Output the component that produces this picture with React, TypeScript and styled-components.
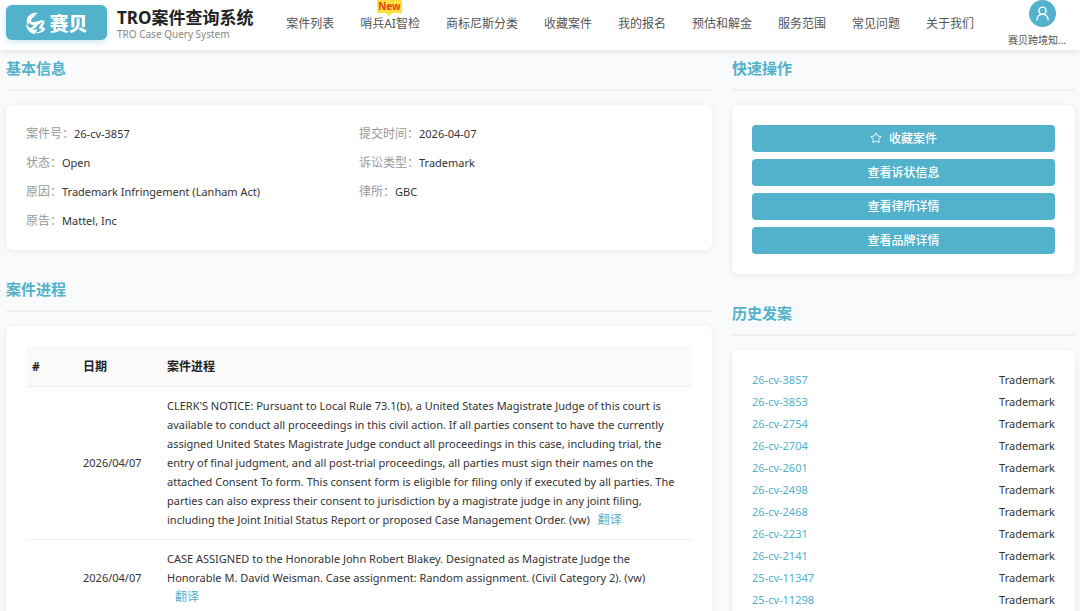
import React from 'react';
import styled, { createGlobalStyle } from 'styled-components';
import { Star, UserRound } from 'lucide-react';

const teal = '#52b1cb';

const GlobalStyle = createGlobalStyle`
  * { box-sizing: border-box; }
  body {
    margin: 0;
    background: #f9fafc;
    color: #333;
    font-family: "Noto Sans", "Noto Sans CJK SC", sans-serif;
    font-size: 11px;
  }
  button { font-family: inherit; cursor: pointer; }
  a { text-decoration: none; }
`;

const Header = styled.header`
  position: sticky;
  top: 0;
  z-index: 2;
  display: flex;
  align-items: center;
  height: 50px;
  padding: 0 4px 0 6px;
  background: #fff;
  box-shadow: 0 2px 6px rgba(0, 0, 0, 0.1);
`;

const Logo = styled.a`
  display: flex;
  align-items: center;
  justify-content: center;
  gap: 3px;
  width: 101px;
  height: 35px;
  margin-bottom: 5px;
  border-radius: 6px;
  background: ${teal};
  box-shadow: 0 2px 6px rgba(82, 177, 203, 0.3);
  color: #fff;
  font-size: 19px;
  font-weight: 900;
`;

const Brand = styled.div`
  flex: 1;
  margin-left: 10px;
  padding-bottom: 2px;
  white-space: nowrap;
`;

const BrandName = styled.h1`
  margin: 0;
  color: #222;
  font-size: 17px;
  line-height: 20px;
  font-weight: 700;
`;

const BrandSub = styled.p`
  margin: 0;
  color: #888;
  font-size: 10px;
  line-height: 12px;
`;

const Nav = styled.nav`
  display: flex;
  gap: 26px;
  margin-right: 34px;
  padding-bottom: 2px;
`;

const NavLink = styled.a`
  position: relative;
  color: #555;
  font-size: 12px;
  line-height: 18px;
  white-space: nowrap;
`;

const NewBadge = styled.span`
  position: absolute;
  left: 17px;
  bottom: 20px;
  padding: 0 1px;
  background: #ffe03c;
  color: #e8401c;
  font-size: 10px;
  line-height: 13px;
  font-weight: 700;

  &::after {
    content: '';
    position: absolute;
    top: 100%;
    left: 50%;
    margin-left: -3px;
    border: 3px solid transparent;
    border-top-color: #ffe03c;
    border-bottom: 0;
  }
`;

const User = styled.button`
  display: flex;
  flex-direction: column;
  align-items: center;
  gap: 5px;
  width: 68px;
  padding: 0 0 2px;
  border: 0;
  background: none;
  color: #555;
  font-size: 10px;
  line-height: 16px;
`;

const UserName = styled.span`
  width: 100%;
  text-align: left;
  white-space: nowrap;
`;

const Avatar = styled.span`
  display: grid;
  place-items: center;
  width: 27px;
  height: 27px;
  border-radius: 50%;
  background: ${teal};
  color: #fff;
`;

const Page = styled.main`
  display: grid;
  grid-template-columns: minmax(0, 35fr) minmax(0, 17fr);
  gap: 20px;
  align-items: start;
  padding: 6px 5px 20px 6px;
`;

const Section = styled.section`
  margin-bottom: 27px;
`;

const SectionTitle = styled.h2`
  margin: 0 0 14px;
  padding-bottom: 9px;
  border-bottom: 2px solid #eef0f3;
  color: ${teal};
  font-size: 15px;
  line-height: 24px;
  font-weight: 700;
`;

const Card = styled.div`
  padding: 20px;
  border-radius: 7px;
  background: #fff;
  box-shadow: 0 1px 7px rgba(0, 0, 0, 0.07);
`;

const Facts = styled.dl`
  display: grid;
  grid-template-columns: 1fr 1fr;
  row-gap: 11px;
  margin: 0;
  line-height: 18px;
`;

const Fact = styled.div<{ $column: number }>`
  grid-column: ${(p) => p.$column};
  display: flex;
  align-items: center;
  height: 18px;
`;

const FactLabel = styled.dt`
  color: #999;
  font-size: 12px;
`;

const FactValue = styled.dd`
  margin: 0;
`;

const Actions = styled.div`
  display: flex;
  flex-direction: column;
  gap: 7px;
`;

const ActionButton = styled.button`
  display: flex;
  align-items: center;
  justify-content: center;
  gap: 7px;
  height: 27px;
  padding: 0 0 2px;
  border: 0;
  border-radius: 4px;
  background: ${teal};
  color: #fff;
  font-size: 12px;
  font-weight: 500;
`;

const Progress = styled.table`
  width: 100%;
  border-collapse: separate;
  border-spacing: 0;
  table-layout: fixed;
`;

const HeadCell = styled.th<{ $width?: number }>`
  width: ${(p) => (p.$width ? `${p.$width}px` : 'auto')};
  height: 41px;
  padding: 0 6px;
  border-bottom: 1px solid #f0f0f0;
  background: #fafafa;
  color: #222;
  font-size: 12px;
  font-weight: 700;
  text-align: left;
`;

const Cell = styled.td`
  padding: 9px 10px 10px 6px;
  border-bottom: 1px solid #f0f0f0;
  line-height: 19px;
`;

const Translate = styled.button`
  margin: 0 8px;
  padding: 0;
  border: 0;
  background: none;
  color: ${teal};
  font-size: 12px;
`;

const History = styled.ul`
  display: flex;
  flex-direction: column;
  gap: 2px;
  margin: 0;
  padding: 0;
  list-style: none;
  line-height: 20px;
`;

const HistoryItem = styled.li`
  display: flex;
  justify-content: space-between;
`;

const CaseLink = styled.a`
  color: ${teal};
`;

const navItems = [
  '案件列表', '哨兵AI智检', '商标尼斯分类', '收藏案件', '我的报名',
  '预估和解金', '服务范围', '常见问题', '关于我们',
];

const facts = [
  { label: '案件号：', value: '26-cv-3857', column: 1 },
  { label: '提交时间：', value: '2026-04-07', column: 2 },
  { label: '状态：', value: 'Open', column: 1 },
  { label: '诉讼类型：', value: 'Trademark', column: 2 },
  { label: '原因：', value: 'Trademark Infringement (Lanham Act)', column: 1 },
  { label: '律所：', value: 'GBC', column: 2 },
  { label: '原告：', value: 'Mattel, Inc', column: 1 },
];

const entries = [
  {
    date: '2026/04/07',
    text: "CLERK'S NOTICE: Pursuant to Local Rule 73.1(b), a United States Magistrate Judge of this court is available to conduct all proceedings in this civil action. If all parties consent to have the currently assigned United States Magistrate Judge conduct all proceedings in this case, including trial, the entry of final judgment, and all post-trial proceedings, all parties must sign their names on the attached Consent To form. This consent form is eligible for filing only if executed by all parties. The parties can also express their consent to jurisdiction by a magistrate judge in any joint filing, including the Joint Initial Status Report or proposed Case Management Order. (vw)",
  },
  {
    date: '2026/04/07',
    text: 'CASE ASSIGNED to the Honorable John Robert Blakey. Designated as Magistrate Judge the Honorable M. David Weisman. Case assignment: Random assignment. (Civil Category 2). (vw)',
  },
];

const history = [
  '26-cv-3857', '26-cv-3853', '26-cv-2754', '26-cv-2704', '26-cv-2601', '26-cv-2498',
  '26-cv-2468', '26-cv-2231', '26-cv-2141', '25-cv-11347', '25-cv-11298',
];

function BirdMark() {
  return (
    <svg width="21" height="22" viewBox="0 0 21 22" fill="#fff" aria-hidden="true">
      <path d="M13 1C8 0 3 3 2 7c-1 3 0 5 2 6C3 9 6 5 13 1Z" />
      <path d="M12 3C8 5 6 7 6 9c1 2 4 1 7 0 3-1 5-1 7 0-4 1-6 3-8 5-2 3-5 4-8 2 2 0 4-1 5-3-3 0-5-1-5-4 0-3 3-5 8-6Z" />
      <path d="M1 12c2 2 3 4 6 5 2 1 4 1 5 0 0 2-1 4-3 5-4-1-8-5-8-10Z" />
      <path d="M19 9c1 2 0 4-2 6 2 0 3 1 3 3-2 2-6 4-10 3 4-1 6-2 7-4h-3c0-3 2-5 5-8Z" />
    </svg>
  );
}

export default function App() {
  return (
    <>
      <GlobalStyle />
      <Header>
        <Logo href="#"><BirdMark />赛贝</Logo>
        <Brand>
          <BrandName>TRO案件查询系统</BrandName>
          <BrandSub>TRO Case Query System</BrandSub>
        </Brand>
        <Nav>
          {navItems.map((item) => (
            <NavLink href="#" key={item}>
              {item}
              {item === '哨兵AI智检' && <NewBadge>New</NewBadge>}
            </NavLink>
          ))}
        </Nav>
        <User type="button">
          <Avatar><UserRound size={17} strokeWidth={2} /></Avatar>
          <UserName>赛贝跨境知...</UserName>
        </User>
      </Header>
      <Page>
        <div>
          <Section>
            <SectionTitle>基本信息</SectionTitle>
            <Card>
              <Facts>
                {facts.map((fact) => (
                  <Fact key={fact.label} $column={fact.column}>
                    <FactLabel>{fact.label}</FactLabel>
                    <FactValue>{fact.value}</FactValue>
                  </Fact>
                ))}
              </Facts>
            </Card>
          </Section>
          <Section>
            <SectionTitle>案件进程</SectionTitle>
            <Card>
              <Progress>
                <thead>
                  <tr>
                    <HeadCell $width={51}>#</HeadCell>
                    <HeadCell $width={84}>日期</HeadCell>
                    <HeadCell>案件进程</HeadCell>
                  </tr>
                </thead>
                <tbody>
                  {entries.map((entry) => (
                    <tr key={entry.text}>
                      <Cell />
                      <Cell>{entry.date}</Cell>
                      <Cell>
                        {entry.text}
                        <Translate type="button">翻译</Translate>
                      </Cell>
                    </tr>
                  ))}
                </tbody>
              </Progress>
            </Card>
          </Section>
        </div>
        <aside>
          <Section>
            <SectionTitle>快速操作</SectionTitle>
            <Card>
              <Actions>
                <ActionButton type="button"><Star size={12} />收藏案件</ActionButton>
                <ActionButton type="button">查看诉状信息</ActionButton>
                <ActionButton type="button">查看律所详情</ActionButton>
                <ActionButton type="button">查看品牌详情</ActionButton>
              </Actions>
            </Card>
          </Section>
          <Section>
            <SectionTitle>历史发案</SectionTitle>
            <Card>
              <History>
                {history.map((id) => (
                  <HistoryItem key={id}>
                    <CaseLink href="#">{id}</CaseLink>
                    <span>Trademark</span>
                  </HistoryItem>
                ))}
              </History>
            </Card>
          </Section>
        </aside>
      </Page>
    </>
  );
}
